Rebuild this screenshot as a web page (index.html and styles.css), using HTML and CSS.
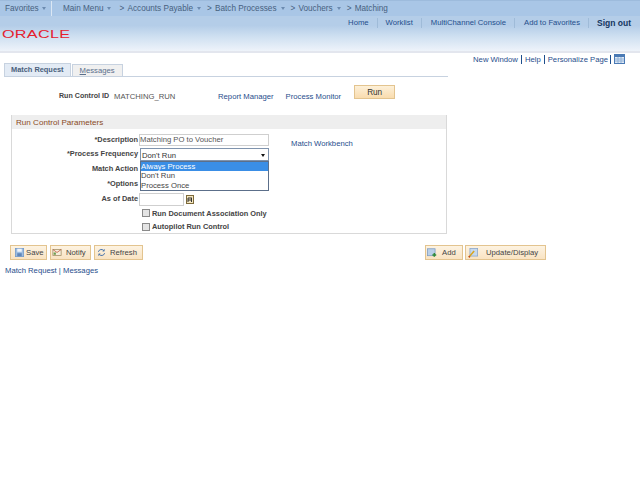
FILE: index.html
```html
<!DOCTYPE html>
<html lang="en">
<head>
  <meta charset="UTF-8">
  <title>Matching</title>
  <link rel="stylesheet" href="styles.css">
</head>
<body>
  <div class="header">
    <div class="nav">
      <span class="nav-fav">Favorites<i class="caret"></i></span>
      <span class="nav-item nav-main">Main Menu<i class="caret"></i></span>
      <span class="nav-item"><b class="sep">&gt;</b>Accounts Payable<i class="caret"></i></span>
      <span class="nav-item"><b class="sep">&gt;</b>Batch Processes<i class="caret"></i></span>
      <span class="nav-item"><b class="sep">&gt;</b>Vouchers<i class="caret"></i></span>
      <span class="nav-item"><b class="sep">&gt;</b>Matching</span>
    </div>
    <div class="header-body">
      <div class="logo">ORACLE</div>
      <div class="toplinks">
        <a>Home</a>
        <a>Worklist</a>
        <a class="wide">MultiChannel Console</a>
        <a class="wide">Add to Favorites</a>
        <a class="signout">Sign out</a>
      </div>
    </div>
  </div>

  <div class="pagelinks">
    <a>New Window</a><i></i><a>Help</a><i></i><a>Personalize Page</a><i class="last"></i>
    <svg class="grid-icon" width="11" height="10" viewBox="0 0 11 10">
      <rect x="0.5" y="0.5" width="10" height="9" fill="#dfe9f5" stroke="#4a7ab5"/>
      <rect x="1" y="1" width="9" height="2" fill="#4a7ab5"/>
      <path d="M1 5h9M1 7h9M4 3v6M7 3v6" stroke="#8fb0d6" fill="none"/>
    </svg>
  </div>

  <div class="tabs">
    <span class="tab active">Match Request</span>
    <span class="tab"><u>M</u>essages</span>
  </div>

  <div class="runbar">
    <span class="label">Run Control ID</span>
    <span class="runid">MATCHING_RUN</span>
    <a class="rm">Report Manager</a>
    <a class="pm">Process Monitor</a>
    <button class="run">Run</button>
  </div>

  <div class="group">
    <div class="group-title">Run Control Parameters</div>
    <div class="form">
      <label>*Description</label>
      <div class="input desc">Matching PO to Voucher</div>
      <a class="workbench">Match Workbench</a>

      <label>*Process Frequency</label>
      <div class="select">Don't Run<i class="select-caret"></i>
        <ul class="dropdown">
          <li class="selected">Always Process</li>
          <li>Don't Run</li>
          <li>Process Once</li>
        </ul>
      </div>

      <label>Match Action</label>

      <label>*Options</label>

      <label>As of Date</label>
      <div class="date-cell">
        <div class="input date"></div>
        <svg width="8" height="9" viewBox="0 0 8 9">
          <rect x="0.5" y="0.5" width="7" height="8" fill="#f4e6c0" stroke="#7d6a3a"/>
          <path d="M2 3h4M2 3v4M5.5 3v4M2 5h3" stroke="#333" fill="none"/>
        </svg>
      </div>

      <div class="check"><i class="box"></i>Run Document Association Only</div>
      <div class="check"><i class="box"></i>Autopilot Run Control</div>
    </div>
  </div>

  <div class="toolbar">
    <button class="btn btn-save">
      <svg width="9" height="9" viewBox="0 0 12 12">
        <rect x="0.5" y="0.5" width="11" height="11" fill="#9dbde2" stroke="#6f97c8"/>
        <rect x="3" y="1" width="6" height="4" fill="#eef4fb"/>
        <rect x="3" y="7" width="6" height="4" fill="#5f85b8"/>
      </svg>Save</button>
    <button class="btn btn-notify">
      <svg width="10" height="9" viewBox="0 0 13 12">
        <rect x="1" y="2" width="11" height="8" fill="#f6eedb" stroke="#a08c62"/>
        <path d="M1 2l5.5 4L12 2" stroke="#c0533a" fill="none"/>
        <rect x="2" y="6" width="3" height="3" fill="#6d9c4e"/>
      </svg>Notify</button>
    <button class="btn btn-refresh">
      <svg width="9" height="9" viewBox="0 0 13 12" fill="none" stroke="#3f6ca8" stroke-width="1.4">
        <path d="M2 5a4.5 4.5 0 0 1 8-1.5"/>
        <path d="M11 7a4.5 4.5 0 0 1-8 1.5"/>
        <path d="M10.5 1v3H8M2.5 11V8H5" stroke-width="1"/>
      </svg>Refresh</button>
    <span class="spacer"></span>
    <button class="btn btn-add">
      <svg width="10" height="10" viewBox="0 0 13 12">
        <rect x="0.5" y="0.5" width="10" height="9" fill="#b9cfe8" stroke="#7d9cc2"/>
        <path d="M9.5 6v5M7 8.5h5" stroke="#2f8a3a" stroke-width="2"/>
      </svg>Add</button>
    <button class="btn btn-update">
      <svg width="10" height="10" viewBox="0 0 13 13">
        <rect x="2.5" y="0.5" width="10" height="10" fill="#c7d9ee" stroke="#8aa6c9"/>
        <path d="M1 12L8 4" stroke="#d9a520" stroke-width="2"/>
        <path d="M1 12l1.5-1" stroke="#c23b2a" stroke-width="2"/>
      </svg>Update/Display</button>
  </div>

  <div class="footer-links"><a>Match Request</a> | <a>Messages</a></div>
</body>
</html>
```

FILE: styles.css
```css
body {
  margin: 0;
  background: #fff;
  font-family: "Liberation Sans", Arial, sans-serif;
  font-size: 7.7px;
  color: #333;
  height: 480px;
  overflow: hidden;
}

a {
  color: #1f4e8c;
}

/* header */
.header {
  height: 51px;
  border-bottom: 2px solid #e3e6ee;
  background: linear-gradient(#b4cde8 0%, #b4cde8 50%, #cfe0f1 72%, #eef3fa 100%);
}

.nav {
  display: flex;
  align-items: center;
  height: 15px;
  border-top: 1px solid #9dbbdc;
  background: #a9c6e6;
  color: #47617f;
  font-size: 8.2px;
}

.nav-fav {
  width: 52px;
  padding-left: 5px;
  box-sizing: border-box;
  border-right: 1px solid #dbe7f4;
  height: 15px;
  line-height: 15px;
}

.nav-main {
  margin-left: 11px;
}

.sep {
  font-weight: normal;
  display: inline-block;
  width: 7px;
  margin: 0 1px 0 0;
}

.caret {
  display: inline-block;
  width: 0;
  height: 0;
  margin: 0 6px 1px 4px;
  border: 2.5px solid transparent;
  border-top: 3px solid #6c8bb0;
  border-bottom: 0;
}

.nav-fav .caret {
  margin: 0 0 1px 3px;
}

.nav-main .caret {
  margin: 0 9px 1px 3px;
}

.header-body {
  display: flex;
  justify-content: space-between;
}

.logo {
  margin: 11px 0 0 2px;
  color: #e5202e;
  font-size: 11px;
  line-height: 14px;
  letter-spacing: 0.2px;
  transform: scaleX(1.47);
  transform-origin: left center;
}

.toplinks {
  display: flex;
  align-items: center;
  height: 13px;
  margin-right: 9px;
}

.toplinks a {
  padding: 0 8px;
  border-left: 1px solid #9fbbd8;
  line-height: 10px;
}

.toplinks a:first-child {
  border-left: 0;
}

.toplinks .wide {
  padding-left: 9px;
}

.toplinks .signout {
  padding-right: 0;
  font-weight: bold;
  font-size: 8.5px;
  color: #14365f;
}

/* page links */
.pagelinks {
  display: flex;
  justify-content: flex-end;
  align-items: center;
  height: 12px;
  margin-right: 15px;
}

.pagelinks i {
  width: 1px;
  height: 9px;
  margin: 0 3px;
  background: #1f4e8c;
}

.pagelinks .last {
  margin: 0 2px;
}

.grid-icon {
  margin-left: 1px;
}

/* tabs */
.tabs {
  display: flex;
  align-items: flex-end;
  height: 13px;
  margin: -2px 192px 0 4px;
  border-bottom: 1px solid #c7d2e0;
}

.tab {
  height: 11px;
  line-height: 12px;
  padding: 0 7px;
  margin-left: 1px;
  border: 1px solid #c7d2e0;
  border-bottom: 0;
  background: #f0f0f0;
  color: #5a6f8c;
}

.tab.active {
  height: 12px;
  margin-left: 0;
  padding: 0 6px;
  font-weight: bold;
  font-size: 7.4px;
  color: #4a5f7c;
  background: #e3ebf5;
}

/* run bar */
.runbar {
  display: flex;
  align-items: center;
  height: 16px;
  margin-top: 11px;
  padding-left: 59px;
}

.label,
.form label,
.check {
  font-weight: bold;
  font-size: 7.4px;
  color: #444;
}

.runbar .label {
  font-size: 7.1px;
}

.runid {
  margin-left: 5px;
  width: 104px;
  color: #555;
}

.pm {
  margin-left: 12px;
}

button {
  font: inherit;
  color: #333;
  padding: 0;
}

.run {
  width: 41px;
  height: 14px;
  margin: -8px 0 0 13px;
  border: 1px solid #e3c48f;
  background: linear-gradient(#fdf0d8, #f9dcae);
  font-size: 8.2px;
}

/* group box */
.group {
  height: 118px;
  margin: 11px 193px 0 11px;
  border: 1px solid #d9d9d9;
  border-top: 0;
}

.group-title {
  height: 14px;
  line-height: 15px;
  padding-left: 4px;
  background: #eeeeee;
  color: #8a4a1e;
  font-size: 8.1px;
}

.form {
  display: grid;
  grid-template-columns: 126px 130px auto;
  grid-template-rows: 14px 15px 15px 15px 15px 14px 13px;
  column-gap: 1px;
  padding-top: 3px;
  align-items: center;
}

.form label {
  grid-column: 1;
  text-align: right;
}

.input {
  box-sizing: border-box;
  height: 12px;
  line-height: 10px;
  border: 1px solid #cfcfcf;
  color: #555;
}

.desc {
  margin-top: 2px;
}

.workbench {
  margin: 8px 0 0 21px;
  white-space: nowrap;
}

.select {
  position: relative;
  align-self: end;
  box-sizing: border-box;
  width: 129px;
  height: 13px;
  line-height: 13px;
  padding-left: 1px;
  margin-left: 1px;
  border: 1px solid #7f93ad;
  background: #fff;
}

.select-caret {
  position: absolute;
  right: 3px;
  top: 5px;
  border: 2.5px solid transparent;
  border-top: 3px solid #111;
  border-bottom: 0;
}

.dropdown {
  position: absolute;
  left: -1px;
  top: 12px;
  width: 127px;
  margin: 0;
  padding: 0;
  list-style: none;
  border: 1px solid #5c6f8a;
  background: #fff;
  z-index: 2;
}

.dropdown li {
  height: 9.4px;
  line-height: 9.4px;
  color: #444;
}

.dropdown .selected {
  background: #3a8ee6;
  color: #fff;
}

.date-cell {
  display: flex;
  align-items: center;
  gap: 2px;
  margin-top: 2px;
}

.date {
  width: 45px;
  height: 13px;
}

.check {
  grid-column: 2 / 4;
  display: flex;
  align-items: center;
  margin-left: 3px;
}

.box {
  box-sizing: border-box;
  width: 8px;
  height: 8px;
  margin-right: 2px;
  border: 1px solid #8a8a8a;
  background: #e4e4e4;
}

/* bottom buttons */
.toolbar {
  display: flex;
  gap: 3px;
  margin: 11px 94px 0 10px;
}

.spacer {
  flex: 1;
}

.btn {
  display: flex;
  align-items: center;
  box-sizing: border-box;
  height: 15px;
  padding-left: 1px;
  border: 1px solid #e3c48f;
  background: linear-gradient(#fdf3e2, #f9e3c2);
  color: #444;
}

.btn-save {
  width: 37px;
  padding-left: 4px;
  gap: 2px;
}

.btn-notify {
  width: 41px;
  gap: 4px;
}

.btn-refresh {
  width: 49px;
  padding-left: 2px;
  gap: 4px;
}

.btn-add {
  width: 38px;
  margin-right: -1px;
  gap: 5px;
}

.btn-update {
  width: 81px;
  padding-left: 2px;
  gap: 8px;
}

.footer-links {
  margin: 6px 0 0 5px;
  color: #1f4e8c;
}
```
